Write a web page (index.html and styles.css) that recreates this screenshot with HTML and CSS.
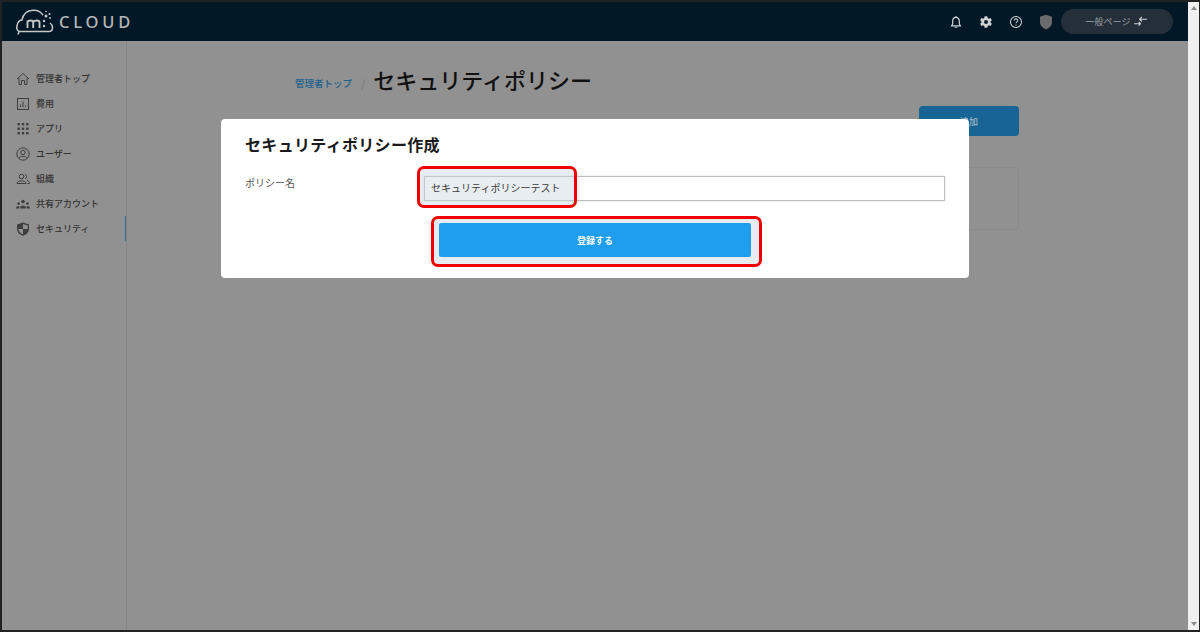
FILE: index.html
```html
<!DOCTYPE html>
<html lang="ja">
<head>
<meta charset="utf-8">
<title>セキュリティポリシー</title>
<link rel="stylesheet" href="styles.css">
</head>
<body>
<div class="window">
  <div class="viewport">
    <header class="topbar">
      <div class="logo">
        <svg class="logo-mark" viewBox="0 0 38 26" width="38" height="26" fill="none" stroke="#c4c7c9" stroke-width="1.5">
          <path d="M2 25.500 L3 22.500 C.8 21 .5 18.500 1 17 C1.500 13.500 3.500 11.200 6 11 C7 5 11 1.500 17 1.200 C21 1 25 3 27 6"/>
          <path d="M3 22.500 H33 C35.500 22.500 36.500 20.500 36.500 18.500 C36.500 16.500 35.500 15 34 14"/>
          <path d="M11.500 19 V11.500 M11.500 13 C12.500 11 16.800 11 17.200 13 V19 M17.200 13 C18.500 11 23 11 23.500 13 V19" stroke-width="1.900"/>
          <circle cx="30" cy="7" r="1.500" fill="#c4c7c9" stroke="none"/>
          <circle cx="33.500" cy="5" r="1.100" fill="#c4c7c9" stroke="none"/>
          <circle cx="30" cy="2.500" r=".8" fill="#c4c7c9" stroke="none"/>
          <circle cx="34" cy="9" r=".9" fill="#c4c7c9" stroke="none"/>
          <circle cx="28" cy="12" r="1.200" fill="#c4c7c9" stroke="none"/>
          <circle cx="28" cy="17" r="1.200" fill="#c4c7c9" stroke="none"/>
        </svg>
        <span class="logo-text">CLOUD</span>
      </div>
      <div class="top-actions">
        <svg class="top-icon" viewBox="0 0 16 16" fill="none" stroke="#cfd2d4" stroke-width="1.4"><path d="M3 12.300 H13 L11.800 10.500 V7 C11.800 4.500 10.300 2.800 8 2.800 C5.700 2.800 4.200 4.500 4.200 7 V10.500 Z"/><path d="M8 1 V2.800 M6.500 14 H9.500" /></svg>
        <svg class="top-icon" viewBox="0 0 16 16"><path fill="#cfd2d4" fill-rule="evenodd" d="M6.500 1.500 H9.500 L10 3.500 L11.300 4.200 L13.200 3.500 L14.700 6 L13.200 7.300 V8.700 L14.700 10 L13.200 12.500 L11.300 11.800 L10 12.500 L9.500 14.500 H6.500 L6 12.500 L4.700 11.800 L2.800 12.500 L1.300 10 L2.800 8.700 V7.300 L1.300 6 L2.800 3.500 L4.700 4.200 L6 3.500 Z M8 5.800 A2.200 2.200 0 1 0 8 10.200 A2.200 2.200 0 1 0 8 5.800 Z"/></svg>
        <svg class="top-icon" viewBox="0 0 16 16" fill="none" stroke="#cfd2d4" stroke-width="1.2"><circle cx="8" cy="8" r="6.300"/><path d="M6 6.400 C6 3.800 10 3.800 10 6.300 C10 7.800 8 7.800 8 9.500"/><path d="M8 10.800 V12"/></svg>
        <svg class="top-icon shield" viewBox="0 0 16 16"><path fill="#696b6d" d="M8 .8 L14 2.800 V8 C14 11.500 11.500 14 8 15.400 C4.500 14 2 11.500 2 8 V2.800 Z"/></svg>
        <div class="switch">
          <span>一般ページ</span>
          <svg viewBox="0 0 16 12" width="15" height="11" fill="none" stroke="#cfd2d4" stroke-width="1.200"><path d="M15 3.500 H7 M9.500 1 L7 3.500 L9.500 6 M1 8.500 H8 M6 6.500 L8 8.500 L6 10.500"/></svg>
        </div>
      </div>
    </header>
    <div class="body">
      <nav class="sidebar">
        <a class="nav-item"><svg class="nav-icon" viewBox="0 0 14 14" fill="none" stroke="#3e3e3e"><path d="M1 7 L7 1.500 L13 7 M3 6 V12.500 H5.500 V8.500 H8.500 V12.500 H11 V6"/></svg><span>管理者トップ</span></a>
        <a class="nav-item"><svg class="nav-icon" viewBox="0 0 14 14" fill="none" stroke="#3e3e3e"><rect x="1.500" y="1.500" width="11" height="11"/><path d="M4.500 10 V7.500 M7 10 V4.500 M9.500 10 V8.500"/></svg><span>費用</span></a>
        <a class="nav-item"><svg class="nav-icon" viewBox="0 0 14 14" fill="#3e3e3e"><rect x="1.500" y="1" width="2.400" height="2.400"/><rect x="5.800" y="1" width="2.400" height="2.400"/><rect x="10.100" y="1" width="2.400" height="2.400"/><rect x="1.500" y="5.500" width="2.400" height="2.400"/><rect x="5.800" y="5.500" width="2.400" height="2.400"/><rect x="10.100" y="5.500" width="2.400" height="2.400"/><rect x="1.500" y="10" width="2.400" height="2.400"/><rect x="5.800" y="10" width="2.400" height="2.400"/><rect x="10.100" y="10" width="2.400" height="2.400"/></svg><span>アプリ</span></a>
        <a class="nav-item"><svg class="nav-icon" viewBox="0 0 14 14" fill="none" stroke="#3e3e3e"><circle cx="7" cy="7" r="6.200"/><circle cx="7" cy="5.500" r="2.200"/><path d="M3 11 C4 8.800 10 8.800 11 11"/></svg><span>ユーザー</span></a>
        <a class="nav-item"><svg class="nav-icon" viewBox="0 0 14 14" fill="none" stroke="#3e3e3e"><circle cx="5.500" cy="4.500" r="2.300"/><path d="M1 11.500 C1 8 10 8 10 11.500 Z"/><path d="M9 2.500 C11 2.500 11 6.500 9 6.500 M11 8 C12.500 8.500 13.500 10 13.500 11.500 H11.500"/></svg><span>組織</span></a>
        <a class="nav-item"><svg class="nav-icon" viewBox="0 0 16 14" fill="#3e3e3e"><circle cx="8" cy="4" r="2"/><circle cx="3" cy="6.500" r="1.500"/><circle cx="13" cy="6.500" r="1.500"/><path d="M4.500 12 C4.500 7.500 11.500 7.500 11.500 12 Z M0 12 C0 9.500 3 8.800 4 9.500 L3.500 12 Z M16 12 C16 9.500 13 8.800 12 9.500 L12.500 12 Z"/></svg><span>共有アカウント</span></a>
        <a class="nav-item active"><svg class="nav-icon" viewBox="0 0 14 14"><path fill="#3e3e3e" fill-rule="evenodd" d="M7 .5 L13 2.500 V7 C13 10.300 10.500 12.700 7 13.800 C3.500 12.700 1 10.300 1 7 V2.500 Z M7 2 V7 H2.300 C2.600 9.500 4.500 11.500 7 12.300 V7 H11.700 V3.400 Z"/></svg><span>セキュリティ</span></a>
      </nav>
      <main class="content">
        <div class="crumbs">
          <a class="crumb-link">管理者トップ</a>
          <span class="crumb-sep">/</span>
          <h1>セキュリティポリシー</h1>
        </div>
        <div class="toolbar"><button class="add-btn">追加</button></div>
        <div class="panel"></div>
      </main>
    </div>
  </div>
  <div class="scrollbar">
    <svg class="arrow" viewBox="0 0 10 6" width="10" height="6"><path fill="#8a8a8a" d="M5 1 L8 5 H2 Z"/></svg>
    <svg class="arrow" viewBox="0 0 10 6" width="10" height="6"><path fill="#8a8a8a" d="M5 5 L8 1 H2 Z"/></svg>
  </div>
  <div class="overlay">
    <section class="modal">
      <h2>セキュリティポリシー作成</h2>
      <div class="form-row">
        <label>ポリシー名</label>
        <div class="field">
          <div class="input"><span class="input-text">セキュリティポリシーテスト</span></div>
          <span class="callout callout-input"></span>
        </div>
      </div>
      <div class="submit-wrap">
        <button class="submit">登録する</button>
      </div>
    </section>
  </div>
</div>
</body>
</html>
```

FILE: styles.css
```css
* { box-sizing: border-box; }
html, body { margin: 0; height: 100%; }
body {
  font-family: "Noto Sans CJK JP", "Noto Sans", sans-serif;
  background: #fff;
  overflow: hidden;
}
.window {
  position: relative;
  display: flex;
  width: 1200px;
  height: 632px;
  border: 2px solid #222;
  border-right-width: 1px;
  background: #919191;
  overflow: hidden;
}
.viewport { flex: 1; min-width: 0; display: flex; flex-direction: column; height: 100%; }
.scrollbar {
  flex: 0 0 11px;
  background: #f0f0f0;
  display: flex;
  flex-direction: column;
  justify-content: space-between;
  align-items: center;
  padding: 3px 0;
}
.arrow { display: block; }
.topbar {
  flex: 0 0 39px;
  background: #031826;
  display: flex;
  align-items: center;
  justify-content: space-between;
  padding: 0 15px 0 14px;
}
.logo { display: flex; align-items: center; gap: 5px; }
.logo-mark { margin-top: 1px; }
.logo-text {
  color: #b4b7b9;
  font-family: "Noto Sans", sans-serif;
  font-size: 16.500px;
  font-weight: 500;
  letter-spacing: 3.800px;
  line-height: 20px;
}
.top-actions { display: flex; align-items: center; }
.top-icon { width: 14px; height: 14px; margin-right: 16px; }
.shield { width: 16px; height: 16px; margin-left: -1px; margin-right: 7px; }
.switch {
  width: 112px;
  height: 25px;
  border-radius: 13px;
  background: #242f39;
  color: #9a9ea1;
  font-size: 9px;
  display: flex;
  align-items: center;
  justify-content: center;
  gap: 3px;
}
.body { flex: 1; display: flex; min-height: 0; }
.sidebar {
  flex: 0 0 125px;
  border-right: 1px solid #858585;
  padding-top: 25px;
}
.nav-item {
  height: 25px;
  display: flex;
  align-items: center;
  padding-left: 14px;
  gap: 6px;
  font-size: 9px;
  font-weight: 500;
  color: #333;
  white-space: nowrap;
}
.nav-item.active { border-right: 1px solid #2b6c9e; }
.nav-icon { width: 14px; height: 14px; flex: none; }
.content { flex: 1; padding: 24px 169px 0 168px; }
.crumbs { display: flex; align-items: center; height: 30px; }
.crumb-link { color: #1d618f; font-size: 9.500px; font-weight: 500; margin-top: 6px; }
.crumb-sep { color: #777; font-size: 11px; margin: 6px 8px 0 9px; }
h1 { margin: -3px 0 0; font-size: 22px; font-weight: 500; color: #111; line-height: 30px; }
.toolbar { display: flex; justify-content: flex-end; margin-top: 11px; }
.add-btn {
  width: 100px;
  height: 30px;
  border: 0;
  border-radius: 4px;
  background: #186494;
  color: #9fb8c8;
  font: 500 9px "Noto Sans CJK JP", sans-serif;
}
.panel {
  margin-top: 31px;
  margin-left: auto;
  width: 230px;
  height: 63px;
  border: 1px solid #8a8a8a;
  border-radius: 4px;
}
.overlay { position: absolute; inset: 0; }
.modal {
  position: absolute;
  left: 219px;
  top: 117px;
  width: 748px;
  height: 159px;
  background: #fff;
  border-radius: 4px;
  padding: 15px 24px 0 24px;
}
h2 { margin: 0; font-size: 16px; font-weight: 700; color: #1a1a1a; line-height: 20px; letter-spacing: .32px; }
.form-row { display: flex; margin-top: 22px; }
label { flex: 0 0 179px; font-size: 10px; color: #555; line-height: 16px; margin-top: -1px; }
.field { flex: 1; position: relative; }
.input {
  height: 25px;
  border: 1px solid #bdbdbd;
  box-shadow: 0 0 2px #ddd;
  display: flex;
  padding-left: 6px;
}
.input-text {
  position: relative;
  z-index: 1;
  font-size: 10px;
  line-height: 21px;
  color: #3a3a3a;
}
.callout {
  position: absolute;
  border: 3px solid #f00000;
  border-radius: 7px;
  pointer-events: none;
}
.callout-input {
  left: -7px;
  top: -10px;
  width: 160px;
  height: 42px;
  background: rgba(200, 212, 225, .42);
}
.submit-wrap {
  margin: 15px 0 0 186px;
  width: 331px;
  height: 51px;
  border: 3px solid #f00000;
  border-radius: 7px;
  background: #e8ecf0;
  padding: 4px 8px 7px 5px;
}
.submit {
  display: block;
  width: 100%;
  height: 100%;
  border: 0;
  border-radius: 2px;
  background: #209eee;
  color: #f4f9fd;
  font: 700 9px "Noto Sans CJK JP", sans-serif;
}
```
